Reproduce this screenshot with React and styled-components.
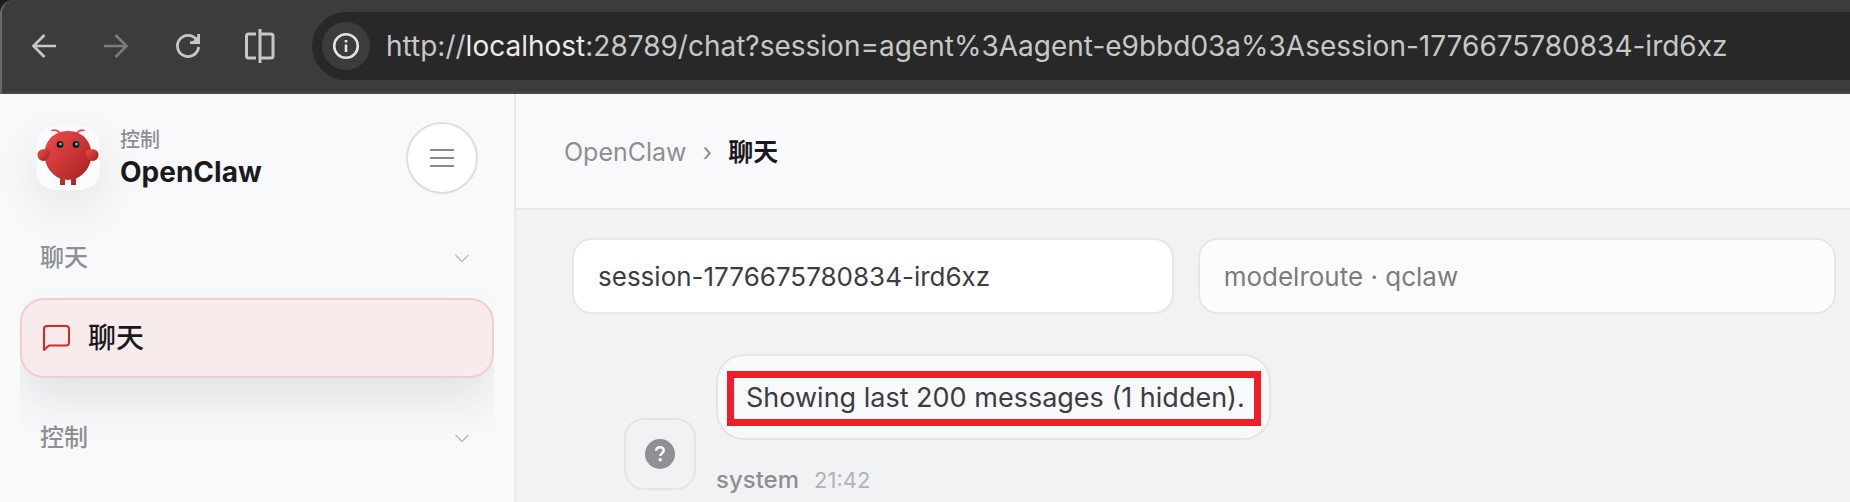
import React, { useState } from "react";
import styled, { createGlobalStyle } from "styled-components";

const GlobalStyle = createGlobalStyle`
  * {
    box-sizing: border-box;
  }
  body {
    margin: 0;
    background: #f1f2f4;
    font-family: Inter, "Noto Sans CJK SC", sans-serif;
    color: #3c3c43;
  }
  button, select {
    font: inherit;
    color: inherit;
    margin: 0;
  }
`;

const Page = styled.div`
  display: flex;
  flex-direction: column;
  min-height: 100vh;
`;

/* browser toolbar */
const Toolbar = styled.header`
  display: flex;
  align-items: center;
  height: 94px;
  padding-left: 16px;
  gap: 20px;
  background: #3c3c3c;
  border-left: 2px solid #6b6b6b;
  border-bottom: 2px solid #474848;
  border-top-left-radius: 14px;
`;

const ToolbarBack = styled.div`
  background: #1c1c1c;
`;

const ToolButton = styled.button`
  display: flex;
  align-items: center;
  justify-content: center;
  width: 52px;
  height: 52px;
  padding: 0;
  border: 0;
  background: none;
  color: ${(props) => (props.disabled ? "#7b7b7b" : "#c7c7c7")};
`;

const AddressBar = styled.div`
  display: flex;
  flex: 1;
  align-items: center;
  gap: 16px;
  height: 68px;
  margin-left: 6px;
  padding-left: 10px;
  border-radius: 34px 0 0 34px;
  background: #282828;
  overflow: hidden;
`;

const InfoButton = styled.button`
  display: flex;
  align-items: center;
  justify-content: center;
  flex: none;
  width: 48px;
  height: 48px;
  padding: 0;
  border: 0;
  border-radius: 50%;
  background: #3c3c3c;
  color: #e3e3e3;
`;

const Url = styled.div`
  font-size: 28px;
  line-height: 36px;
  white-space: nowrap;
  color: #c7c7c7;
  outline: none;
  b {
    font-weight: 400;
    color: #eaeaea;
  }
`;

const Shell = styled.div`
  display: flex;
  flex: 1;
`;

/* sidebar */
const Sidebar = styled.aside`
  flex: none;
  width: 516px;
  padding-top: 28px;
  background: #f8f9fb;
  border-right: 2px solid #e8e9eb;
`;

const Brand = styled.div`
  display: flex;
  align-items: center;
  gap: 20px;
  padding: 0 36px;
`;

const Logo = styled.div`
  width: 64px;
  height: 64px;
  border-radius: 20px;
  background: #fafbfc;
  box-shadow: 0 16px 48px rgba(0, 0, 0, 0.09);
`;

const BrandText = styled.div`
  flex: 1;
`;

const Eyebrow = styled.div`
  font-size: 20px;
  font-weight: 500;
  line-height: 28px;
  color: #8e8e93;
`;

const BrandName = styled.div`
  font-size: 28px;
  font-weight: 700;
  line-height: 36px;
  color: #1a1a1e;
`;

const MenuButton = styled.button`
  display: flex;
  align-items: center;
  justify-content: center;
  width: 72px;
  height: 72px;
  padding: 0;
  border: 2px solid #dedee0;
  border-radius: 50%;
  background: #fff;
  color: #8a8a92;
`;

const Nav = styled.nav`
  margin: 0 20px;
  padding-top: 36px;
  overflow: hidden;
`;

const NavLabel = styled.button`
  display: flex;
  align-items: center;
  justify-content: space-between;
  width: 100%;
  height: 56px;
  padding: 0 22px 0 20px;
  border: 0;
  background: none;
  font-size: 24px;
  font-weight: 500;
  line-height: 32px;
  color: #8e8e93;
  svg {
    color: #bcbcbf;
  }
`;

const NavItem = styled.a`
  display: flex;
  align-items: center;
  gap: 18px;
  height: 80px;
  margin: 12px 0 32px;
  padding: 0 20px;
  border: 2px solid #f2cccd;
  border-radius: 24px;
  background: #f7ebeb;
  box-shadow: 0 24px 48px rgba(0, 0, 0, 0.09);
  font-size: 28px;
  font-weight: 500;
  line-height: 36px;
  color: #1a1a1e;
  text-decoration: none;
  svg {
    color: #dc2626;
  }
`;

/* main column */
const Main = styled.main`
  flex: 1;
  min-width: 0;
`;

const Topbar = styled.div`
  display: flex;
  align-items: center;
  gap: 16px;
  height: 116px;
  padding: 2px 48px 0;
  background: #f8f9fb;
  border-bottom: 2px solid #e8e9eb;
  font-size: 25px;
  line-height: 32px;
  color: #8e8e93;
  a {
    color: inherit;
    text-decoration: none;
  }
  strong {
    font-weight: 700;
    color: #1a1a1e;
  }
`;

const Controls = styled.div`
  display: flex;
  gap: 24px;
  padding: 28px 14px 0 56px;
`;

const Select = styled.select`
  flex: ${(props) => props.$grow} 1 0;
  min-width: 0;
  height: 76px;
  padding: 0 24px;
  appearance: none;
  border: 2px solid #e5e5ea;
  border-radius: 20px;
  background: ${(props) => (props.disabled ? "#fbfdfc" : "#fff")};
  font-size: 26px;
  color: ${(props) => (props.disabled ? "#7b7b80" : "#3c3c43")};
  opacity: 1;
`;

const MessageGroup = styled.div`
  display: flex;
  align-items: flex-end;
  gap: 20px;
  padding: 40px 108px 0;
`;

const Avatar = styled.div`
  display: flex;
  align-items: center;
  justify-content: center;
  flex: none;
  width: 72px;
  height: 72px;
  margin-bottom: 4px;
  border: 2px solid #e4e5e7;
  border-radius: 20px;
`;

const Bubble = styled.div`
  position: relative;
  width: fit-content;
  padding: 23px 24px 21px 28px;
  border: 2px solid #e4e5e7;
  border-radius: 28px;
  background: #f8f9fb;
  font-size: 27px;
  line-height: 38px;
  white-space: nowrap;
`;

const Highlight = styled.span`
  position: absolute;
  inset: 15px 8px 12px 9px;
  border: 7px solid #f21d28;
  pointer-events: none;
`;

const Meta = styled.div`
  display: flex;
  align-items: baseline;
  gap: 15px;
  margin-top: 26px;
  font-size: 24px;
  line-height: 28px;
  font-weight: 500;
  color: #8e8e93;
  time {
    font-size: 22px;
    font-weight: 400;
    color: #b3b3b7;
  }
`;

const Icon = ({ size, width = 2, children }) => (
  <svg
    width={size}
    height={size}
    viewBox={`0 0 ${size} ${size}`}
    fill="none"
    stroke="currentColor"
    strokeWidth={width}
    aria-hidden="true"
  >
    {children}
  </svg>
);

const Chevron = () => (
  <Icon size={20} width={1.5}>
    <path d="M3.500 7l6.500 6.500L16.500 7" />
  </Icon>
);

const ClawLogo = () => (
  <svg width="64" height="64" viewBox="0 0 64 64" aria-hidden="true">
    <defs>
      <linearGradient id="claw" x1="0" y1="0" x2="1" y2="1">
        <stop offset="0" stopColor="#f24b4b" />
        <stop offset="1" stopColor="#a01f1f" />
      </linearGradient>
    </defs>
    <g fill="none" stroke="#ef4a4a" strokeWidth="1.6" strokeLinecap="round">
      <path d="M24.500 7.500Q21 3 16 4.500" />
      <path d="M40.500 7.500Q44 3 48 4.500" />
    </g>
    <path
      fill="url(#claw)"
      d="M32 5C16 5 8.500 17 8.500 28.500c0 11.500 7.500 21 15.500 24V59h5v-5.500q3 .8 6 0V59h5v-6.500c8-3 15.500-12.500 15.500-24C55.500 17 48 5 32 5z"
    />
    <path fill="url(#claw)" d="M12 24C5 22 1.500 25 1.500 29c0 4 4 7 8 5.500C12.500 33 14.500 27.500 14 25z" />
    <path fill="url(#claw)" d="M52 24c7-2 10.500 1 10.500 5 0 4-4 7-8 5.500C51.500 33 49.500 27.500 50 25z" />
    <circle cx="24" cy="18.500" r="3.300" fill="#06090c" />
    <circle cx="40" cy="18.500" r="3.300" fill="#06090c" />
    <circle cx="24.500" cy="18" r="1.600" fill="#00e5cc" />
    <circle cx="40.500" cy="18" r="1.600" fill="#00e5cc" />
  </svg>
);

function BrowserToolbar() {
  return (
    <ToolbarBack>
      <Toolbar>
        <ToolButton aria-label="Back">
          <Icon size={28} width={2.6}>
            <path d="M26 14H4M14.500 3L3.500 14l11 11" />
          </Icon>
        </ToolButton>
        <ToolButton aria-label="Forward" disabled>
          <Icon size={28} width={2.6}>
            <path d="M2 14h22M13.500 3l11 11-11 11" />
          </Icon>
        </ToolButton>
        <ToolButton aria-label="Reload">
          <Icon size={28} width={2.8}>
            <path d="M22.500 7.500A10.600 10.600 0 1 0 24.600 15" />
            <path d="M24.600 2v8.600h-8.600" />
            <path d="M18 10l6-6v6z" fill="currentColor" stroke="none" />
          </Icon>
        </ToolButton>
        <ToolButton aria-label="Split view">
          <Icon size={34} width={3}>
            <path d="M13 5H5.500a2 2 0 0 0-2 2v20a2 2 0 0 0 2 2H13M17 0v34M17 5h11a2 2 0 0 1 2 2v20a2 2 0 0 1-2 2H17" />
          </Icon>
        </ToolButton>
        <AddressBar>
          <InfoButton aria-label="Site information">
            <Icon size={28} width={2.6}>
              <circle cx="14" cy="14" r="11.800" />
              <path d="M14 12.500v7.500M14 8v2.400" />
            </Icon>
          </InfoButton>
          <Url role="textbox" aria-label="Address" tabIndex={0}>
            http://<b>localhost</b>
            :28789/chat?session=agent%3Aagent-e9bbd03a%3Asession-1776675780834-ird6xz
          </Url>
        </AddressBar>
      </Toolbar>
    </ToolbarBack>
  );
}

function SideMenu() {
  return (
    <Sidebar>
      <Brand>
        <Logo>
          <ClawLogo />
        </Logo>
        <BrandText>
          <Eyebrow>控制</Eyebrow>
          <BrandName>OpenClaw</BrandName>
        </BrandText>
        <MenuButton aria-label="Menu">
          <Icon size={24}>
            <path d="M0 4h24M0 12h24M0 20h24" />
          </Icon>
        </MenuButton>
      </Brand>
      <Nav>
        <NavLabel>
          聊天
          <Chevron />
        </NavLabel>
        <NavItem href="#chat">
          <Icon size={28}>
            <path
              strokeLinejoin="round"
              d="M2 26V5a3 3 0 0 1 3-3h19a3 3 0 0 1 3 3v13.500a3 3 0 0 1-3 3H7z"
            />
          </Icon>
          聊天
        </NavItem>
        <NavLabel>
          控制
          <Chevron />
        </NavLabel>
      </Nav>
    </Sidebar>
  );
}

function App() {
  const [session, setSession] = useState("session-1776675780834-ird6xz");

  return (
    <Page>
      <GlobalStyle />
      <BrowserToolbar />
      <Shell>
        <SideMenu />
        <Main>
          <Topbar>
            <a href="#home">OpenClaw</a>
            <span>›</span>
            <strong>聊天</strong>
          </Topbar>
          <Controls>
            <Select
              $grow={15}
              aria-label="Session"
              value={session}
              onChange={(e) => setSession(e.target.value)}
            >
              <option>session-1776675780834-ird6xz</option>
            </Select>
            <Select $grow={16} aria-label="Model" disabled>
              <option>modelroute · qclaw</option>
            </Select>
          </Controls>
          <MessageGroup>
            <Avatar>
              <svg width="30" height="30" viewBox="0 0 30 30" aria-hidden="true">
                <circle cx="15" cy="15" r="15" fill="#908f95" />
                <path
                  d="M11.200 11.800c0-2.200 1.600-3.500 3.800-3.500s3.800 1.300 3.800 3.300c0 2.700-3.500 2.700-3.500 5.300"
                  fill="none"
                  stroke="#f8f9fb"
                  strokeWidth="2.400"
                />
                <circle cx="15.200" cy="20.800" r="1.700" fill="#f8f9fb" />
              </svg>
            </Avatar>
            <div>
              <Bubble>
                Showing last 200 messages (1 hidden).
                <Highlight />
              </Bubble>
              <Meta>
                <span>system</span>
                <time>21:42</time>
              </Meta>
            </div>
          </MessageGroup>
        </Main>
      </Shell>
    </Page>
  );
}

export default App;
